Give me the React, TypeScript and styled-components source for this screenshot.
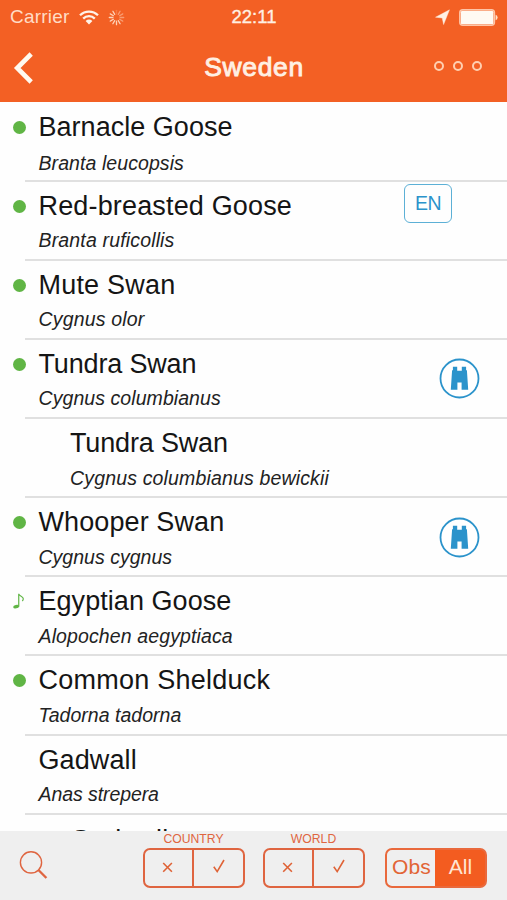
import React from 'react';
import styled, { createGlobalStyle } from 'styled-components';

const ORANGE = '#f36024';
const LINE_ORANGE = '#df6540';
const BLUE = '#2b93cb';
const GREEN = '#60b545';

const GlobalStyle = createGlobalStyle`
  * { box-sizing: border-box; }
  body {
    margin: 0;
    background: #fff;
    font-family: "Liberation Sans", Arial, sans-serif;
    color: #161616;
  }
`;

const Screen = styled.div`
  width: 507px;
  height: 900px;
  overflow: hidden;
  display: flex;
  flex-direction: column;
  background: #fefefe;
`;

const Header = styled.header`
  flex: 0 0 101.5px;
  background: ${ORANGE};
  color: #fff0e3;
  display: flex;
  flex-direction: column;
`;

const StatusBar = styled.div`
  height: 34px;
  padding: 0 9px 0 10px;
  display: grid;
  grid-template-columns: 1fr auto 1fr;
  align-items: center;
`;

const StatusGroup = styled.div<{ $end?: boolean }>`
  display: flex;
  align-items: center;
  justify-content: ${(p) => (p.$end ? 'flex-end' : 'flex-start')};
  gap: 9px;
`;

const Carrier = styled.span`
  font-size: 19px;
  line-height: 34px;
  letter-spacing: 0.22px;
  color: #ffdcc5;
`;

const Clock = styled.span`
  font-size: 18.5px;
  line-height: 34px;
  color: #fff0e3;
  -webkit-text-stroke: 0.35px #fff0e3;
`;

const NavBar = styled.div`
  height: 67px;
  padding: 0 25px 0 13px;
  display: grid;
  grid-template-columns: 1fr auto 1fr;
  align-items: center;
`;

const BackButton = styled.button`
  width: 24px;
  height: 36px;
  padding: 0;
  border: 0;
  background: none;
  display: flex;
`;

const Title = styled.h1`
  margin: 0 0 0 13px;
  font-size: 26.5px;
  line-height: 67px;
  font-weight: 400;
  letter-spacing: 0.65px;
  color: #fff0e3;
  -webkit-text-stroke: 0.9px #fff0e3;
`;

const MoreButton = styled.button`
  justify-self: end;
  padding: 0;
  margin-bottom: 4px;
  border: 0;
  background: none;
  display: flex;
  gap: 9px;
`;

const Ring = styled.span`
  width: 10px;
  height: 10px;
  border: 2px solid #ffcfb0;
  border-radius: 50%;
`;

const List = styled.ul`
  flex: 1 1 0;
  min-height: 0;
  margin: 0;
  padding: 1px 0 0;
  list-style: none;
  overflow: hidden;
`;

const Row = styled.li`
  height: 79.15px;
  display: grid;
  grid-template-columns: 25px 1fr;
`;

const Marker = styled.div`
  height: 49px;
  padding-left: 13px;
  display: flex;
  align-items: center;
`;

const Dot = styled.span`
  width: 13px;
  height: 13px;
  flex: none;
  border-radius: 50%;
  background: ${GREEN};
`;

const RowBody = styled.div<{ $child?: boolean }>`
  padding-left: ${(p) => (p.$child ? 45 : 13.5)}px;
  border-bottom: 2px solid #e0e0e0;
  display: flex;
  justify-content: space-between;
`;

const Names = styled.div<{ $offset: number; $gap: number }>`
  padding-top: ${(p) => p.$offset}px;
  display: flex;
  flex-direction: column;
  gap: ${(p) => p.$gap}px;
  white-space: nowrap;
`;

const CommonName = styled.span<{ $tracking: number }>`
  font-size: 27px;
  line-height: 32px;
  letter-spacing: ${(p) => p.$tracking}px;
  color: #151515;
`;

const LatinName = styled.em<{ $tracking: number }>`
  font-size: 19.5px;
  line-height: 22px;
  letter-spacing: ${(p) => p.$tracking}px;
  color: #222;
`;

const CodeBadge = styled.span`
  width: 48px;
  height: 39px;
  margin: 2px 55px 0 0;
  border: 1.5px solid #5cb0d6;
  border-radius: 6px;
  display: flex;
  align-items: center;
  justify-content: center;
  padding-top: 1px;
  font-size: 19.5px;
  letter-spacing: -0.6px;
  color: ${BLUE};
`;

const SeenBadge = styled.span`
  width: 41px;
  height: 41px;
  margin: 18.5px 27px 0 0;
  display: flex;
`;

const Toolbar = styled.footer`
  flex: 0 0 69px;
  padding: 0 20px 0 19px;
  background: #efefef;
  display: flex;
  color: ${LINE_ORANGE};
`;

const SearchButton = styled.button`
  width: 30px;
  height: 30px;
  margin: 19px 94px 0 0;
  padding: 0;
  border: 0;
  background: none;
  display: flex;
`;

const FilterGroup = styled.div<{ $gap?: number }>`
  width: 102px;
  margin-right: ${(p) => p.$gap ?? 0}px;
  display: flex;
  flex-direction: column;
  align-items: center;
`;

const FilterLabel = styled.span`
  height: 16.5px;
  margin-right: 1px;
  font-size: 12.2px;
  line-height: 17px;
`;

const Segments = styled.div<{ $solid?: boolean }>`
  width: 102px;
  height: 40px;
  display: grid;
  grid-template-columns: 1fr 1fr;
  border: 2px solid ${(p) => (p.$solid ? '#e9693c' : LINE_ORANGE)};
  border-radius: 7px;
  background: ${(p) => (p.$solid ? 'linear-gradient(90deg, transparent 49%, #f35c20 49%) border-box' : 'none')};
`;

const Segment = styled.button<{ $active?: boolean; $divided?: boolean }>`
  min-width: 0;
  padding: 0 0 2px;
  border: 0;
  border-right: ${(p) => (p.$divided ? `2px solid ${LINE_ORANGE}` : '0')};
  background: none;
  color: ${(p) => (p.$active ? '#ffe5d3' : '#e26435')};
  font-family: inherit;
  font-size: 21px;
  letter-spacing: ${(p) => (p.$active ? 0 : 0.1)}px;
  line-height: 34px;
  display: flex;
  align-items: center;
  justify-content: center;
`;

const WifiIcon = () => (
  <svg width="20" height="15" viewBox="0 0 20 15" fill="none" stroke="#fff3e8" strokeWidth="2.3">
    <path d="M1 5.2 C6 .3 14 .3 19 5.2" />
    <path d="M4.2 8.6 C7.4 5.4 12.6 5.4 15.8 8.6" />
    <path d="M6.6 11 Q10 8.2 13.4 11 L10 14.5Z" fill="#fff3e8" stroke="none" />
  </svg>
);

const SpinnerIcon = () => (
  <svg width="17" height="17" viewBox="-8.5 -8.5 17 17" stroke="#ffd9c0" strokeWidth="1.3" strokeLinecap="round">
    {[0, 30, 60, 90, 120, 150, 180, 210, 240, 270, 300, 330].map((a) => (
      <path key={a} d="M0 -3.6V-7.2" transform={`rotate(${a})`} opacity={a === 0 ? 0.2 : a >= 150 ? 0.95 : 0.5} />
    ))}
  </svg>
);

const LocationIcon = () => (
  <svg width="15" height="16" viewBox="0 0 15 16">
    <path d="M14.5 .8 L8.6 15.6 L7.2 9 L.5 8.2Z" fill="#fff0e3" stroke="#fff0e3" strokeWidth=".4" />
  </svg>
);

const BatteryIcon = () => (
  <svg width="39" height="17" viewBox="0 0 39 17">
    <rect x=".8" y=".8" width="34.6" height="15.4" rx="3" fill="none" stroke="#ffc5a7" strokeWidth="1.5" />
    <rect x="1.8" y="1.8" width="32.6" height="13.4" rx="1.5" fill="#fffaf3" />
    <path d="M36.6 5.8 Q38.6 6.4 38.6 8.5 T36.6 11.2Z" fill="#ffe2cc" />
  </svg>
);

const BackIcon = () => (
  <svg width="24" height="36" viewBox="0 0 24 36">
    <path d="M18.2 4 L4.2 18 L18.2 32" fill="none" stroke="#fffaf0" strokeWidth="4.6" />
  </svg>
);

const NoteIcon = () => (
  <svg width="14" height="20" viewBox="0 0 14 20" fill="none">
    <ellipse cx="3.6" cy="15.4" rx="3.4" ry="2" fill={GREEN} transform="rotate(-12 3.6 15.4)" />
    <path d="M6.7 15.4V.4 C7.1 3.4 12 3.2 12 6.2 Q12 7.8 10.8 8.8" stroke={GREEN} strokeWidth="1.4" />
  </svg>
);

const BinocularsIcon = () => (
  <svg width="41" height="41" viewBox="0 0 41 41">
    <circle cx="20.5" cy="20.5" r="19" fill="#fff" stroke={BLUE} strokeWidth="1.8" />
    <path
      d="M13.9 8.8H18.2V12.7H22.8V8.8H27.1V12.2H27.9L29.2 31.8H22.6V24.4H18.4V31.8H11.8L13.1 12.2H13.9Z"
      fill={BLUE}
    />
  </svg>
);

const SearchIcon = () => (
  <svg width="30" height="30" viewBox="0 0 30 30" fill="none" stroke={LINE_ORANGE}>
    <circle cx="12" cy="12.4" r="10.6" strokeWidth="1.4" />
    <path d="M19.4 20 L27.4 28" strokeWidth="2.4" />
  </svg>
);

const CrossIcon = () => (
  <svg width="14" height="12" viewBox="0 0 14 12">
    <path d="M1.2 2 L9.9 10.7 M9.9 2 L1.2 10.7" stroke="#df6337" strokeWidth="1.6" />
  </svg>
);

const CheckIcon = () => (
  <svg width="14" height="17" viewBox="0 0 14 17">
    <path d="M1.8 8.8 L5.2 13.6 L12 2" fill="none" stroke="#df6337" strokeWidth="1.6" />
  </svg>
);

type Bird = {
  name: string;
  latin?: string;
  marker?: 'dot' | 'note';
  child?: boolean;
  badge?: 'code' | 'seen';
  tracking?: number;
  latinTracking?: number;
  offset?: number;
  gap?: number;
};

const birds: Bird[] = [
  { name: 'Barnacle Goose', latin: 'Branta leucopsis', marker: 'dot', tracking: 0.03, latinTracking: 0.08, gap: 9 },
  { name: 'Red-breasted Goose', latin: 'Branta ruficollis', marker: 'dot', badge: 'code', tracking: 0.16 },
  { name: 'Mute Swan', latin: 'Cygnus olor', marker: 'dot' },
  { name: 'Tundra Swan', latin: 'Cygnus columbianus', marker: 'dot', badge: 'seen', tracking: -0.16, latinTracking: 0.07 },
  { name: 'Tundra Swan', latin: 'Cygnus columbianus bewickii', child: true, tracking: -0.16 },
  { name: 'Whooper Swan', latin: 'Cygnus cygnus', marker: 'dot', badge: 'seen', tracking: 0.1, latinTracking: 0.02 },
  { name: 'Egyptian Goose', latin: 'Alopochen aegyptiaca', marker: 'note', tracking: 0.05, latinTracking: 0.12 },
  { name: 'Common Shelduck', latin: 'Tadorna tadorna', marker: 'dot', tracking: 0.24, latinTracking: 0.03 },
  { name: 'Gadwall', latin: 'Anas strepera', tracking: 0.1, latinTracking: -0.08 },
  { name: 'Gadwall', child: true, tracking: 0.1, offset: 9 },
];

const Filter = ({ label, gap }: { label: string; gap: number }) => (
  <FilterGroup $gap={gap}>
    <FilterLabel>{label}</FilterLabel>
    <Segments>
      <Segment $divided aria-label={`${label} not seen`}><CrossIcon /></Segment>
      <Segment aria-label={`${label} seen`}><CheckIcon /></Segment>
    </Segments>
  </FilterGroup>
);

export default function App() {
  return (
    <>
      <GlobalStyle />
      <Screen>
        <Header>
          <StatusBar>
            <StatusGroup>
              <Carrier>Carrier</Carrier>
              <WifiIcon />
              <SpinnerIcon />
            </StatusGroup>
            <Clock>22:11</Clock>
            <StatusGroup $end>
              <LocationIcon />
              <BatteryIcon />
            </StatusGroup>
          </StatusBar>
          <NavBar>
            <BackButton aria-label="Back"><BackIcon /></BackButton>
            <Title>Sweden</Title>
            <MoreButton aria-label="More"><Ring /><Ring /><Ring /></MoreButton>
          </NavBar>
        </Header>
        <List>
          {birds.map((b, i) => (
            <Row key={i}>
              <Marker>
                {b.marker === 'dot' && <Dot />}
                {b.marker === 'note' && <NoteIcon />}
              </Marker>
              <RowBody $child={b.child}>
                <Names $offset={b.offset ?? 8} $gap={b.gap ?? 7.5}>
                  <CommonName $tracking={b.tracking ?? 0.2}>{b.name}</CommonName>
                  {b.latin && <LatinName $tracking={b.latinTracking ?? 0.16}>{b.latin}</LatinName>}
                </Names>
                {b.badge === 'code' && <CodeBadge>EN</CodeBadge>}
                {b.badge === 'seen' && <SeenBadge><BinocularsIcon /></SeenBadge>}
              </RowBody>
            </Row>
          ))}
        </List>
        <Toolbar>
          <SearchButton aria-label="Search"><SearchIcon /></SearchButton>
          <Filter label="COUNTRY" gap={18} />
          <Filter label="WORLD" gap={20} />
          <FilterGroup>
            <FilterLabel />
            <Segments $solid>
              <Segment>Obs</Segment>
              <Segment $active>All</Segment>
            </Segments>
          </FilterGroup>
        </Toolbar>
      </Screen>
    </>
  );
}
